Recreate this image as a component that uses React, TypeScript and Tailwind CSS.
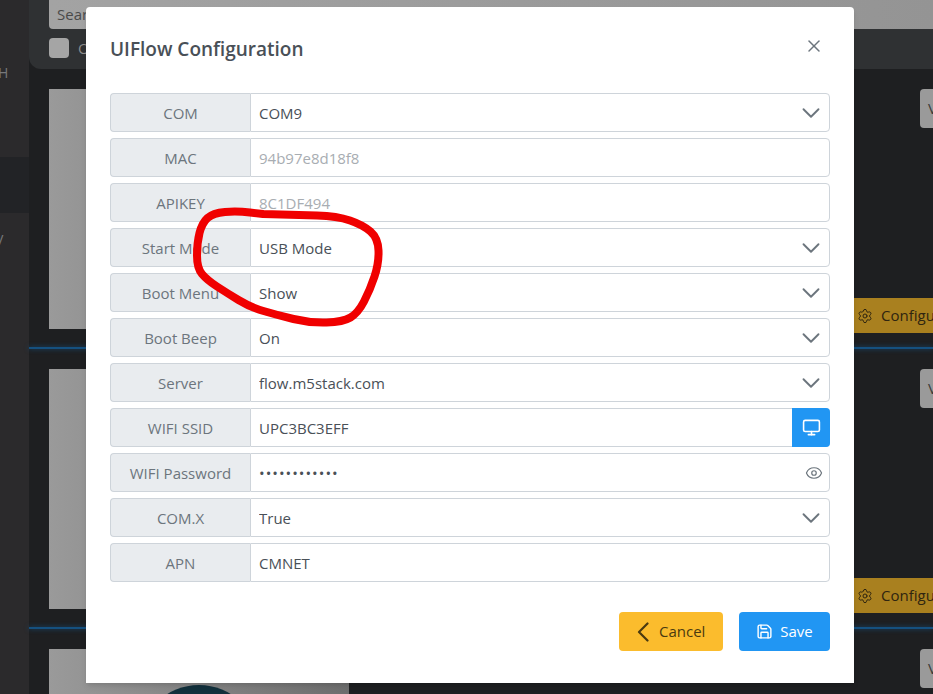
import { Eye, Monitor, Save, Settings, X } from 'lucide-react'

const rows = [
  { label: 'COM', value: 'COM9', kind: 'select' },
  { label: 'MAC', value: '94b97e8d18f8', kind: 'disabled' },
  { label: 'APIKEY', value: '8C1DF494', kind: 'disabled' },
  { label: 'Start Mode', value: 'USB Mode', kind: 'select' },
  { label: 'Boot Menu', value: 'Show', kind: 'select' },
  { label: 'Boot Beep', value: 'On', kind: 'select' },
  { label: 'Server', value: 'flow.m5stack.com', kind: 'select' },
  { label: 'WIFI SSID', value: 'UPC3BC3EFF', kind: 'scan' },
  { label: 'WIFI Password', value: '123456789012', kind: 'password' },
  { label: 'COM.X', value: 'True', kind: 'select' },
  { label: 'APN', value: 'CMNET', kind: 'text' },
]

// freehand circle drawn on top of the screenshot
const scribble: [number, number][] = [
  [263, 214], [297, 215], [337, 216], [363, 225], [378, 238], [379, 263], [370, 290], [358, 313],
  [343, 322], [310, 323], [277, 315], [250, 307], [227, 293], [207, 280], [197, 268], [197, 243],
  [202, 223], [213, 213], [237, 211], [263, 214],
]

function scribblePath() {
  let d = `M${scribble[0][0]} ${scribble[0][1]}`
  for (let i = 1; i < scribble.length - 1; i++) {
    const [x, y] = scribble[i]
    const [nx, ny] = scribble[i + 1]
    d += ` Q${x} ${y} ${(x + nx) / 2} ${(y + ny) / 2}`
  }
  const last = scribble[scribble.length - 1]
  return `${d} L${last[0]} ${last[1]}`
}

function Chevron() {
  return (
    <svg className="pointer-events-none absolute right-[9px] top-[10px] h-5 w-5 text-[#6c757d]" viewBox="0 0 16 16" fill="none">
      <path d="m2 5 6 6 6-6" stroke="currentColor" strokeWidth="1.5" strokeLinecap="round" strokeLinejoin="round" />
    </svg>
  )
}

function ConfigRow({ label, value, kind }: { label: string; value: string; kind: string }) {
  return (
    <div className="flex h-[39px]">
      <div className="flex w-[140px] shrink-0 items-center justify-center rounded-l border border-r-0 border-[#ced4da] bg-[#e9ecef] pt-px text-[#6c757d]">
        {label}
      </div>
      <div className="relative flex-1">
        {kind === 'select' ? (
          <>
            <select
              defaultValue={value}
              className="h-full w-full appearance-none rounded-r border border-[#ced4da] bg-white pl-2 pt-px text-[#495057] outline-none"
            >
              <option>{value}</option>
            </select>
            <Chevron />
          </>
        ) : (
          <input
            readOnly
            type={kind === 'password' ? 'password' : 'text'}
            defaultValue={value}
            className={`h-full w-full rounded-r border border-[#ced4da] bg-white pl-2 pt-px outline-none ${
              kind === 'disabled' ? 'text-[#a8adb2]' : 'text-[#495057]'
            } ${kind === 'password' ? 'tracking-[1px]' : ''}`}
          />
        )}
        {kind === 'password' && <Eye className="absolute right-[7px] top-[11px] h-[18px] w-[18px] text-[#6c757d]" strokeWidth={1.6} />}
        {kind === 'scan' && (
          <button className="absolute right-0 top-0 flex h-[39px] w-[38px] items-center justify-center rounded-r bg-[#2196f3] text-white">
            <Monitor size={19} strokeWidth={2} />
          </button>
        )}
      </div>
    </div>
  )
}

function DeviceRow({ last }: { last?: boolean }) {
  return (
    <div className="h-[280px] shrink-0">
      <div className="flex h-[278px] items-start pl-5 pt-5">
        <div className="relative h-[240px] w-[300px] shrink-0 overflow-hidden bg-gradient-to-r from-[#9a9a9a] to-[#6e6e6e]">
          {last && <div className="absolute left-[90px] top-[36px] h-[120px] w-[120px] rounded-full bg-[#12303c]" />}
        </div>
        <div className="flex h-[244px] flex-1 flex-col items-end justify-between">
          <div className="h-[39px] w-[13px] rounded-l bg-[#9a9a9a] pl-2 pt-2 text-[#3a3a3a]">V</div>
          {!last && (
            <div className="flex h-[35px] w-[85px] items-center gap-[8px] bg-[#a9801f] pl-[9px] text-[#2f2510]">
              <Settings size={16} className="shrink-0" strokeWidth={1.5} />
              <span className="whitespace-nowrap">Configure</span>
            </div>
          )}
          {last && <div className="-mb-[6px] mr-[79px] h-[44px] w-[505px] bg-[#171717] pl-[103px] pt-[36px]"><div className="h-[2px] w-3 bg-[#8a8a8a]" /></div>}
        </div>
      </div>
      {!last && <div className="h-[2px] bg-[#15507f] shadow-[0_0_5px_#15507f]" />}
    </div>
  )
}

export default function App() {
  return (
    <div className="relative flex h-[694px] w-[933px] overflow-hidden bg-[#1e1f21] font-['Open_Sans','Noto_Sans',sans-serif] text-[15px]">
      <aside className="flex w-[29px] shrink-0 flex-col bg-[#222326] text-sm text-[#77787a]">
        <div className="h-[157px] bg-[#2b2a2c] pt-[63px]">
          <span className="-ml-[2px] block">H</span>
        </div>
        <div className="h-[56px]" />
        <div className="flex-1 bg-[#2b2a2c] pt-[17px]">
          <span className="-ml-[5px] block">V</span>
        </div>
      </aside>

      <main className="flex min-w-0 flex-1 flex-col">
        <div className="h-[69px] shrink-0 rounded-bl-[12px] bg-[#2f3133] pl-5">
          <div className="h-[29px] rounded-bl bg-gradient-to-r from-[#a3a3a3] to-[#949494] pl-2 pt-[3px] text-[#4a4a4a]">Search</div>
          <div className="mt-2 flex items-center gap-[9px] text-[#8d8d8d]">
            <div className="h-5 w-5 rounded-sm bg-[#a5a5a5]" />
            <span>O</span>
          </div>
        </div>
        <DeviceRow />
        <DeviceRow />
        <DeviceRow last />
      </main>

      <div className="absolute left-[86px] top-[7px] h-[676px] w-[768px] rounded-t bg-white px-6 pt-6 shadow-md">
        <div className="flex h-[62px] items-start justify-between">
          <h2 className="mt-[4px] text-[19px] font-semibold text-[#495057]">UIFlow Configuration</h2>
          <X className="mr-[6px] mt-[5px] text-[#6c757d]" size={20} strokeWidth={1.8} />
        </div>
        <div className="flex flex-col gap-[6px]">
          {rows.map((r) => (
            <ConfigRow key={r.label} {...r} />
          ))}
        </div>
        <div className="mt-[30px] flex justify-end gap-4">
          <button className="flex h-[39px] w-[104px] items-center gap-[10px] rounded bg-[#fbbc2d] pl-[18px] text-[#4a3a10]">
            <svg className="h-5 w-3" viewBox="0 0 12 20" fill="none">
              <path d="M10.5 1.5 2 10l8.5 8.5" stroke="currentColor" strokeWidth="2.2" strokeLinecap="round" strokeLinejoin="round" />
            </svg>
            Cancel
          </button>
          <button className="flex h-[39px] w-[91px] items-center justify-center gap-[7px] rounded bg-[#2196f3] text-white">
            <Save size={17} strokeWidth={2} />
            Save
          </button>
        </div>
      </div>

      <svg className="pointer-events-none absolute left-0 top-0 h-[694px] w-[933px]" viewBox="0 0 933 694" fill="none">
        <path d={scribblePath()} stroke="#f00000" strokeWidth="8" strokeLinecap="round" strokeLinejoin="round" />
      </svg>
    </div>
  )
}
